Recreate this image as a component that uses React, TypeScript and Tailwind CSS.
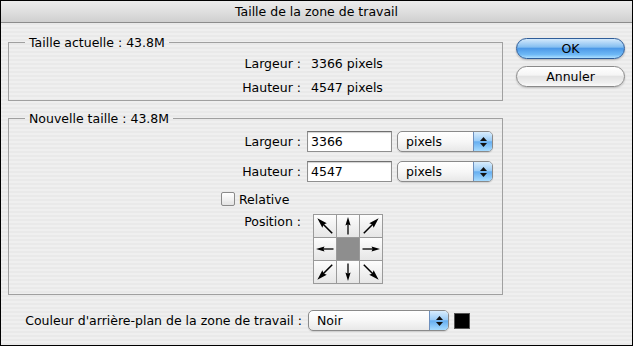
import React from 'react';

const arrowAngles: (number | null)[] = [-45, 0, 45, -90, null, 90, -135, 180, 135];

function Arrow({ angle }: { angle: number }) {
  const diag = angle % 90 !== 0;
  return (
    <svg width="22" height="22" viewBox="0 0 22 22">
      <g transform={`rotate(${angle} 11 11) translate(11 11) scale(${diag ? 1.2 : 1}) translate(-11 -11)`}>
        <line x1="11" y1="19.5" x2="11" y2="8" stroke="#000" strokeWidth="1.3" />
        <polygon points="11,2 8.4,10.5 11,9.3 13.6,10.5" fill="#000" />
      </g>
    </svg>
  );
}

function Popup({ value, width }: { value: string; width: string }) {
  return (
    <div
      className={`flex h-[21px] ${width} overflow-hidden rounded-[5px] border border-[#8a8a8a] bg-[linear-gradient(180deg,#ffffff_0%,#f7f7f7_50%,#e8e8e8_100%)] shadow-[0_1px_1px_rgba(0,0,0,0.12)]`}
    >
      <span className="flex-1 pl-[8px] leading-[19px]">{value}</span>
      <span className="flex w-[19px] flex-col items-center justify-center gap-[2px] border-l border-[#6d8fbd] bg-[linear-gradient(180deg,#d9edfd_0%,#9ccdf7_45%,#66aef0_52%,#a6dbff_100%)]">
        <svg width="7" height="4" viewBox="0 0 7 4">
          <polygon points="3.5,0 7,4 0,4" fill="#111" />
        </svg>
        <svg width="7" height="4" viewBox="0 0 7 4">
          <polygon points="0,0 7,0 3.5,4" fill="#111" />
        </svg>
      </span>
    </div>
  );
}

function TextInput({ value }: { value: string }) {
  return (
    <div className="ml-[6px] h-[21px] w-[85px] border border-[#8f8f8f] border-t-[#6f6f6f] bg-white pl-[3px] leading-[19px] shadow-[inset_0_1px_1px_rgba(0,0,0,0.18)]">
      {value}
    </div>
  );
}

export default function App() {
  return (
    <div className="h-[346px] w-[633px] overflow-hidden border border-black bg-[repeating-linear-gradient(180deg,#efefef_0px,#efefef_2px,#e9e9e9_2px,#e9e9e9_4px)] font-['DejaVu_Sans','Liberation_Sans',sans-serif] text-[12.5px] leading-[15px] text-black">
      {/* title bar */}
      <div className="h-[22px] border-b border-[#8c8c8c] bg-[linear-gradient(180deg,#ececec_0%,#dcdcdc_60%,#cfcfcf_100%)] text-center leading-[21px]">
        Taille de la zone de travail
      </div>

      <div className="flex">
        <div className="pl-[7px] pt-[12px]">
          <fieldset className="w-[495px] border border-[#a0a0a0] pb-[1px] pt-[1px]">
            <legend className="ml-[16px] px-[4px] leading-[15px]">Taille actuelle : 43.8M</legend>
            <div className="flex h-[24px] items-center">
              <span className="w-[292px] text-right">Largeur :</span>
              <span className="ml-[10px]">3366 pixels</span>
            </div>
            <div className="flex h-[24px] items-center">
              <span className="w-[292px] text-right">Hauteur :</span>
              <span className="ml-[10px]">4547 pixels</span>
            </div>
          </fieldset>

          <fieldset className="mt-[10px] w-[495px] border border-[#a0a0a0] pb-[10px] pt-[5px]">
            <legend className="ml-[16px] px-[4px] leading-[15px]">Nouvelle taille : 43.8M</legend>
            <div className="flex h-[21px] items-center">
              <span className="w-[292px] text-right">Largeur :</span>
              <TextInput value="3366" />
              <div className="ml-[5px]">
                <Popup value="pixels" width="w-[96px]" />
              </div>
            </div>
            <div className="mt-[9px] flex h-[21px] items-center">
              <span className="w-[292px] text-right">Hauteur :</span>
              <TextInput value="4547" />
              <div className="ml-[5px]">
                <Popup value="pixels" width="w-[96px]" />
              </div>
            </div>
            <div className="mt-[10px] flex h-[14px] items-center">
              <span className="ml-[212px] h-[14px] w-[14px] rounded-[2px] border border-[#8a8a8a] bg-[linear-gradient(180deg,#ffffff_0%,#f2f2f2_50%,#e2e2e2_100%)]" />
              <span className="ml-[4px]">Relative</span>
            </div>
            <div className="mt-[8px] flex items-start">
              <span className="w-[292px] text-right">Position :</span>
              <div className="ml-[12px] grid grid-cols-[22px_22px_22px] gap-px border border-[#9a9a9a] bg-[#9a9a9a]">
                {arrowAngles.map((a, i) =>
                  a === null ? (
                    <div key={i} className="h-[22px] w-[22px] bg-[#8e8e8e]" />
                  ) : (
                    <div
                      key={i}
                      className="h-[22px] w-[22px] bg-[linear-gradient(180deg,#fdfdfd_0%,#f1f1f1_50%,#e6e6e6_100%)]"
                    >
                      <Arrow angle={a} />
                    </div>
                  )
                )}
              </div>
            </div>
          </fieldset>

          <div className="mt-[15px] flex items-center">
            <span className="w-[294px] text-right">Couleur d'arrière-plan de la zone de travail :</span>
            <div className="ml-[6px]">
              <Popup value="Noir" width="w-[141px]" />
            </div>
            <span className="ml-[5px] h-[16px] w-[16px] border border-[#555] bg-black" />
          </div>
        </div>

        <div className="flex flex-col gap-[7px] pl-[13px] pt-[15px]">
          <button className="h-[21px] w-[109px] rounded-full border border-[#2f5d99] bg-[linear-gradient(180deg,#d3e9fc_0%,#86bff1_42%,#4d99e7_50%,#6fb9f6_82%,#aee0ff_100%)] leading-[19px] shadow-[0_1px_2px_rgba(0,0,0,0.25)]">
            OK
          </button>
          <button className="h-[21px] w-[109px] rounded-full border border-[#8a8a8a] bg-[linear-gradient(180deg,#ffffff_0%,#f5f5f5_42%,#e3e3e3_50%,#efefef_82%,#fbfbfb_100%)] leading-[19px] shadow-[0_1px_2px_rgba(0,0,0,0.2)]">
            Annuler
          </button>
        </div>
      </div>
    </div>
  );
}
